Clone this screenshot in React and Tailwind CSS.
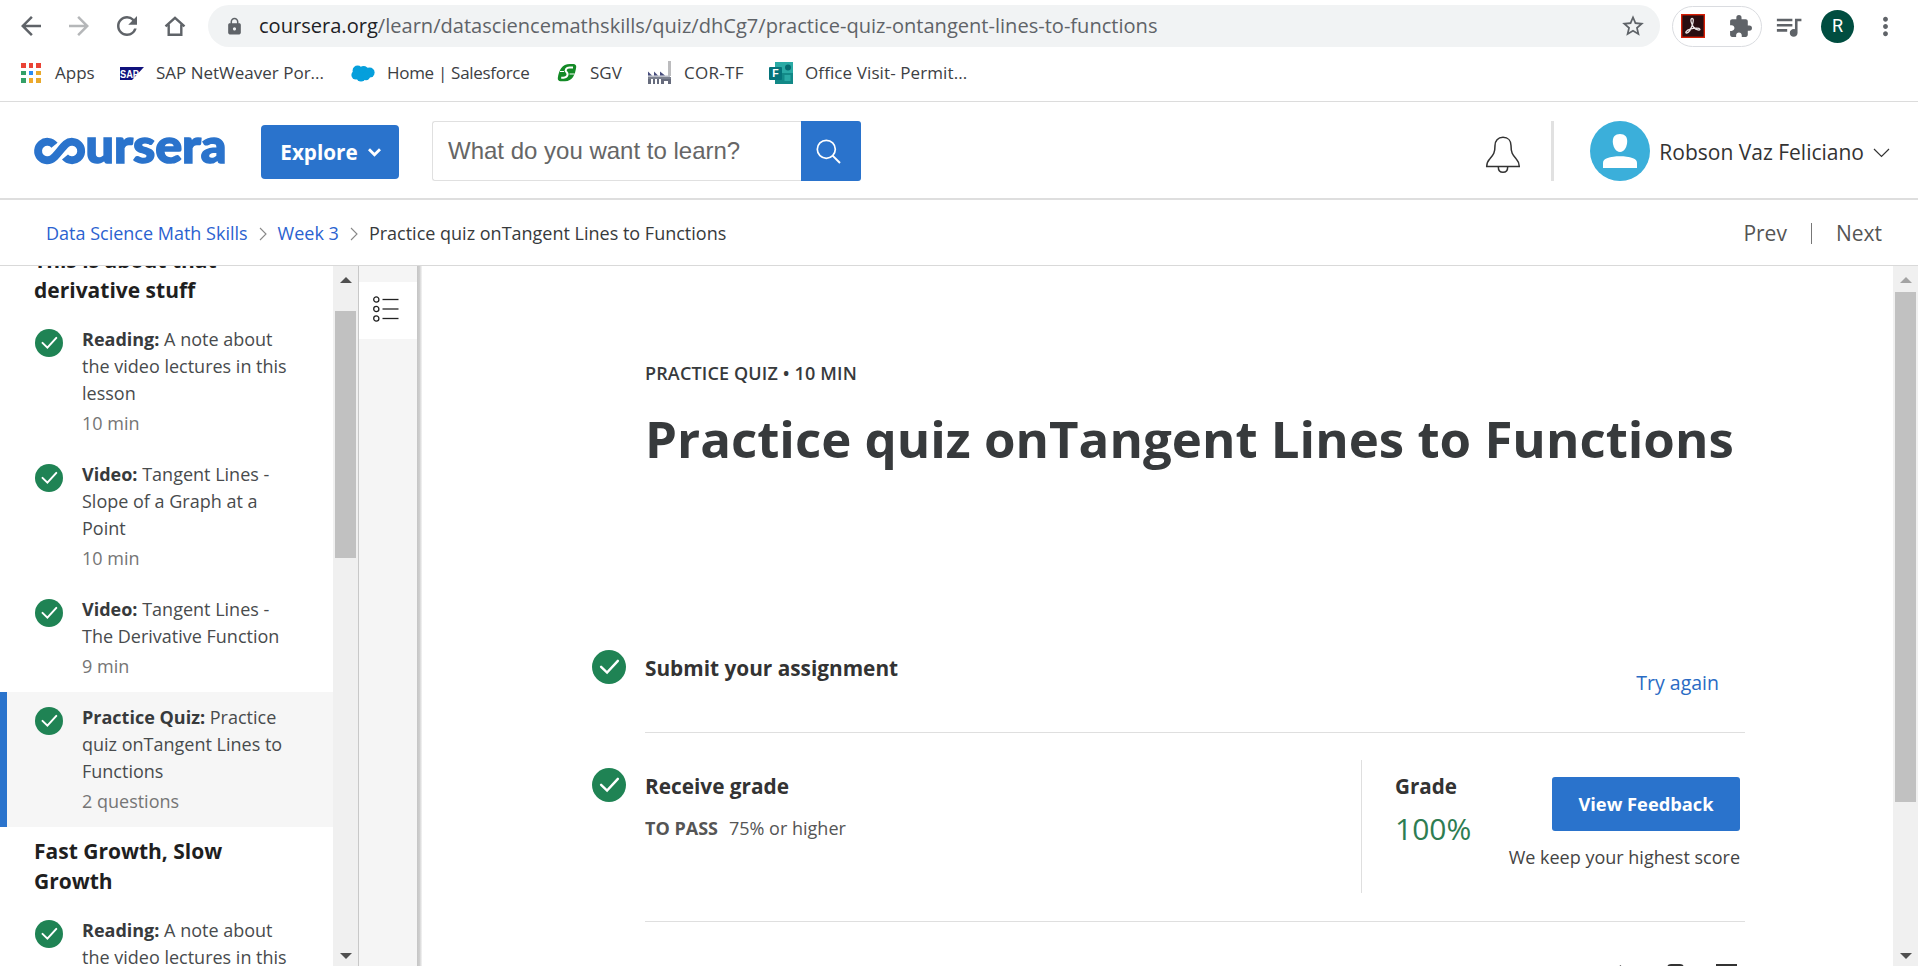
import React from 'react';
import {
  MdArrowBack,
  MdArrowForward,
  MdRefresh,
  MdLock,
  MdStarBorder,
  MdExtension,
  MdQueueMusic,
  MdMoreVert,
} from 'react-icons/md';

const APP_COLORS = [
  'bg-[#ea4335]', 'bg-[#ea4335]', 'bg-[#ea4335]',
  'bg-[#34a068]', 'bg-[#2a8bf2]', 'bg-[#e8a92c]',
  'bg-[#34a068]', 'bg-[#f0a92c]', 'bg-[#e8a92c]',
];

function AppsIcon() {
  return (
    <div className="grid w-5 grid-cols-3 gap-[3px]">
      {APP_COLORS.map((c, i) => (
        <span key={i} className={`h-[4.7px] ${c}`} />
      ))}
    </div>
  );
}

function SapIcon() {
  return (
    <svg width="24" height="13" viewBox="0 0 24 13">
      <path d="M0 0h24L12 13H0z" fill="#10127c" />
      <text x="0" y="10.6" fontFamily="Liberation Sans, sans-serif" fontWeight="700" fontSize="11.5" textLength="19" lengthAdjust="spacingAndGlyphs" fill="#fff">SAP</text>
    </svg>
  );
}

function SalesforceIcon() {
  return (
    <svg width="24" height="17" viewBox="0 0 24 17" fill="#059fdc" className="-ml-px">
      <circle cx="6.6" cy="5.6" r="5" />
      <circle cx="12.6" cy="5.6" r="4.6" />
      <circle cx="18.6" cy="7.6" r="5" />
      <circle cx="5" cy="10" r="4.6" />
      <circle cx="10" cy="12" r="4.6" />
      <circle cx="15" cy="11" r="4.2" />
    </svg>
  );
}

function SgvIcon() {
  return (
    <svg width="20" height="20" viewBox="0 0 20 20">
      <path d="M13 1h3.500a2.800 2.800 0 0 1 2.700 3.300c-1 7-3.600 14-11.200 14H3.500A2.800 2.800 0 0 1 .8 15C2 7 5 1 13 1z" fill="#138a26" />
      <path d="M16 4.600h-3.500C9.300 4.600 7.500 7 9.500 9s1.600 5.800-5.300 5.800" fill="none" stroke="#fff" strokeWidth="2" />
      <path d="M3 8.500h4M12.500 11h5" stroke="#fff" strokeWidth="1.100" />
    </svg>
  );
}

function FactoryIcon() {
  return (
    <svg width="24" height="24" viewBox="0 0 24 24">
      <path d="M20 0h3v15h-3z" fill="#bcbcbe" />
      <path d="M0 16h23v2H0z" fill="#7b808e" />
      <path d="M0 14.500h22V16H0z" fill="#b9bcc6" />
      <path d="M0 10.500l4 4H0zM6 10.500l4 4H6zM12 10.500l5 4h-5z" fill="#474d7c" />
      <path d="M0 18h3v5H0zM5 18h2v5H5zM9 18h2v5H9zM13 18h10v5h-3v-3h-4v3h-3z" fill="#666b7c" />
    </svg>
  );
}

function FormsIcon() {
  return (
    <svg width="24" height="22" viewBox="0 0 24 22">
      <path d="M6 0h18v22H6z" fill="#2aaaa5" />
      <path d="M6 11h18v11H6z" fill="#128987" />
      <circle cx="19" cy="5.500" r="3" fill="#056b70" />
      <path d="M15.500 13h6v6h-6z" fill="#29a9a4" />
      <rect x="0" y="5" width="13" height="13" rx="1" fill="#05737a" />
      <text x="6.500" y="15.300" textAnchor="middle" fontFamily="Liberation Sans, sans-serif" fontWeight="700" fontSize="10.500" fill="#fff">F</text>
    </svg>
  );
}

const BOOKMARKS = [
  { label: 'Apps', icon: AppsIcon, box: 'w-[99px]', slot: 'w-[34px]', text: '' },
  { label: 'SAP NetWeaver Por...', icon: SapIcon, box: 'w-[232px]', slot: 'w-9', text: '' },
  { label: 'Home | Salesforce', icon: SalesforceIcon, box: 'w-[205px]', slot: 'w-[35px]', text: 'tracking-[-0.3px]' },
  { label: 'SGV', icon: SgvIcon, box: 'w-[91px]', slot: 'w-[33px]', text: '' },
  { label: 'COR-TF', icon: FactoryIcon, box: 'w-[121px]', slot: 'w-9', text: 'tracking-[0.3px]' },
  { label: 'Office Visit- Permit...', icon: FormsIcon, box: 'w-[205px]', slot: 'w-9', text: 'tracking-[0.1px]' },
];

function Browser() {
  return (
    <div className="h-[102px] shrink-0 border-b border-[#dcdcdc] bg-white font-['Open_Sans',sans-serif]">
      <div className="flex h-[47px] items-center pt-[5px] text-[#5f6368]">
        <div className="flex w-[208px] shrink-0 items-center pl-4">
          <MdArrowBack size={30} />
          <MdArrowForward size={30} className="ml-[18px] text-[#b5b7b9]" />
          <MdRefresh size={30} className="ml-[18px]" />
          <svg width="22" height="20" viewBox="0 0 22 20" className="ml-[22px]" fill="none" stroke="currentColor" strokeWidth="2.400" strokeLinejoin="miter">
            <path d="M1.500 10.300L11 1.800l9.500 8.500M4.700 8.500v10.200h12.600V8.500" />
          </svg>
        </div>
        <div className="flex h-[42px] w-[1452px] items-center rounded-full bg-[#f1f3f4] pl-[17px] pr-[14px]">
          <MdLock size={19} />
          <div className="ml-[15px] mt-px flex-1 whitespace-nowrap text-[20.07px] leading-none">
            <span className="text-[#202124]">coursera.org</span>
            <span>/learn/datasciencemathskills/quiz/dhCg7/practice-quiz-ontangent-lines-to-functions</span>
          </div>
          <MdStarBorder size={26} />
        </div>
        <div className="ml-3 flex h-[41px] w-[90px] items-center justify-between rounded-full border border-[#dadce0] pl-2 pr-[8px]">
          <svg width="24" height="24" viewBox="0 0 24 24">
            <rect x="0.700" y="0.700" width="22.600" height="22.600" fill="#2a0d10" stroke="#d81e05" strokeWidth="1.400" />
            <path d="M11 4.500c2 0 1.300 3.500.4 6.300-1 3.200-3.500 8.200-5.700 8.200-2 0-.6-2.600 3.500-3.800 3.300-1 9-1.600 9.700 0 .5 1.600-3.600 1-6-1.700-2.500-2.800-4.200-9-1.900-9z" fill="none" stroke="#e9e2e2" strokeWidth="1.300" />
          </svg>
          <MdExtension size={25} />
        </div>
        <MdQueueMusic size={31} className="ml-[11px]" />
        <div className="ml-[17px] flex size-[33px] items-center justify-center rounded-full bg-[#004d40] font-['Roboto',sans-serif] text-[18px] leading-none text-white">R</div>
        <MdMoreVert size={29} className="ml-[17px]" />
      </div>
      <div className="flex h-[52px] items-center pl-[21px] text-[17px] leading-none text-[#3c4043]">
        {BOOKMARKS.map(({ label, icon: Icon, box, slot, text }) => (
          <div key={label} className={`flex shrink-0 items-center ${box}`}>
            <span className={`shrink-0 ${slot}`}><Icon /></span>
            <span className={`whitespace-nowrap leading-6 ${text}`}>{label}</span>
          </div>
        ))}
      </div>
    </div>
  );
}

function Logo() {
  return (
    <svg width="194" height="70" viewBox="0 -18 194 70" className="shrink-0 overflow-visible">
      <path d="M20.500 11.300A9.200 9.200 0 1 0 19.500 23.800C23.500 20.300 28 13.500 32 10A9.200 9.200 0 1 1 31 23" fill="none" stroke="#2a73cc" strokeWidth="7.900" />
      <text x="51.500" y="29.200" fontFamily="Lato, sans-serif" fontWeight="900" fontSize="48" textLength="141" lengthAdjust="spacingAndGlyphs" fill="#2a73cc" stroke="#2a73cc" strokeWidth="1.500">ursera</text>
    </svg>
  );
}

function Header() {
  return (
    <header className="flex h-[98px] shrink-0 items-center border-b-2 border-[#dedede] pt-[2px] pl-[34px] pr-7">
      <Logo />
      <button className="ml-[33px] mt-[2px] flex h-[54px] w-[138px] items-center justify-center rounded-[4px] bg-[#2a73cc] pl-px pt-px text-[20.700px] font-bold leading-none text-white">
        Explore
        <svg width="13" height="9" viewBox="0 0 13 9" className="ml-[10px]" fill="none" stroke="currentColor" strokeWidth="2.800">
          <path d="M1 1.200l5.500 5.600L12 1.200" />
        </svg>
      </button>
      <div className="ml-[33px] flex h-[60px] w-[429px]">
        <div className="flex flex-1 items-center rounded-l-[3px] border border-r-0 border-[#e0e0e0] pl-[15px] font-['Liberation_Sans',sans-serif] text-2xl leading-none text-[#666]">What do you want to learn?</div>
        <div className="flex w-[60px] items-center justify-center rounded-r-[3px] bg-[#2a73cc] pr-[6px]">
          <svg width="25" height="25" viewBox="0 0 25 25" fill="none" stroke="#fff" strokeWidth="1.700">
            <circle cx="10.300" cy="10.300" r="9" />
            <path d="M16.600 16.600l7.400 7.400" strokeWidth="2" />
          </svg>
        </div>
      </div>
      <svg width="36" height="38" viewBox="0 0 36 38" className="ml-auto mt-2" fill="none" stroke="#333" strokeWidth="1.500">
        <path d="M18 1.300c-5.200 0-8 3.500-8 8.200 0 7-1.400 9-5.300 13.500C2.300 25.600 1.700 27 1.700 30.500h32.600c0-3.500-.6-4.900-3-7.500C27.400 18.500 26 16.500 26 9.500c0-4.700-2.800-8.200-8-8.200z" />
        <path d="M13.300 30.700c0 3.600 2 5.600 4.700 5.600s4.700-2 4.700-5.600" />
      </svg>
      <div className="ml-[30px] h-[60px] w-[3px] bg-[#e1e1e1]" />
      <svg width="60" height="60" viewBox="0 0 60 60" className="ml-9">
        <circle cx="30" cy="30" r="30" fill="#3bafda" />
        <path d="M30 13c5 0 7.200 2.800 7.200 7.500S34.500 31 30 31s-7.200-5.800-7.200-10.500S25 13 30 13z" fill="#fff" />
        <path d="M13 47v-5c0-2.500 1.500-4 4-4.700 8-2.600 18-2.600 26 0 2.500.7 4 2.200 4 4.700v5z" fill="#fff" />
      </svg>
      <div className="ml-[9px] mt-[2px] whitespace-nowrap text-[21px] leading-none text-[#333]">Robson Vaz Feliciano</div>
      <svg width="17" height="10" viewBox="0 0 17 10" className="ml-[9px] mt-1" fill="none" stroke="#333" strokeWidth="1.200">
        <path d="M1 1l7.500 7.500L16 1" />
      </svg>
    </header>
  );
}

function Crumb() {
  return (
    <svg width="8" height="14" viewBox="0 0 8 14" className="mx-[11px] mt-[3px]" fill="none" stroke="#888" strokeWidth="1.100">
      <path d="M1 1l6 6-6 6" />
    </svg>
  );
}

function Breadcrumbs() {
  return (
    <nav className="flex h-[66px] shrink-0 items-center border-b border-[#d9d9d9] pl-[46px] pr-9 text-[18px] leading-none text-[#373a3c]">
      <span className="text-[#2b62d0]">Data Science Math Skills</span>
      <Crumb />
      <span className="text-[#2b62d0]">Week 3</span>
      <Crumb />
      <span>Practice quiz onTangent Lines to Functions</span>
      <div className="ml-auto mt-[2px] flex items-center text-[21px] text-[#555]">
        <span>Prev</span>
        <span className="mx-6 h-[21px] w-px bg-[#777]" />
        <span>Next</span>
      </div>
    </nav>
  );
}

function Check({ size, className = '' }) {
  return (
    <svg width={size} height={size} viewBox="0 0 28 28" className={`shrink-0 ${className}`}>
      <circle cx="14" cy="14" r="14" fill="#1f8354" />
      <path d="M7.500 13.900l4.900 4.700 8.900-9.700" fill="none" stroke="#fff" strokeWidth="2" strokeLinecap="round" />
    </svg>
  );
}

const LESSONS = [
  { kind: 'Reading:', lines: ['A note about', 'the video lectures in this', 'lesson'], time: '10 min' },
  { kind: 'Video:', lines: ['Tangent Lines -', 'Slope of a Graph at a', 'Point'], time: '10 min' },
  { kind: 'Video:', lines: ['Tangent Lines -', 'The Derivative Function'], time: '9 min' },
  { kind: 'Practice Quiz:', lines: ['Practice', 'quiz onTangent Lines to', 'Functions'], time: '2 questions', active: true },
];

const NEXT_LESSON = { kind: 'Reading:', lines: ['A note about', 'the video lectures in this'] };

function Lesson({ kind, lines, time, active }) {
  return (
    <div className={`flex shrink-0 border-l-[7px] py-3 pl-[28px] text-[18px] leading-[27px] ${active ? 'border-[#2a73cc] bg-[#f6f6f6]' : 'border-transparent'}`}>
      <Check size={28} className="mt-[3px]" />
      <div className="ml-[19px] whitespace-nowrap text-[#484b4d]">
        {lines.map((line, i) => (
          <div key={i}>
            {i === 0 && <b className="font-bold text-[#373a3c]">{kind} </b>}
            {line}
          </div>
        ))}
        {time && <div className="mt-[3px] text-[#757575]">{time}</div>}
      </div>
    </div>
  );
}

function Heading({ lines, className }) {
  return (
    <div className={`shrink-0 whitespace-nowrap pb-[9px] pl-[34px] text-[21px] font-bold leading-[30px] text-[#1f1f1f] ${className}`}>
      {lines.map((l) => (
        <div key={l}>{l}</div>
      ))}
    </div>
  );
}

function Arrow({ up, color }) {
  return (
    <svg width="12" height="6" viewBox="0 0 12 6" className="shrink-0" fill={color}>
      <path d={up ? 'M0 6l6-6 6 6z' : 'M0 0h12L6 6z'} />
    </svg>
  );
}

function Sidebar() {
  return (
    <aside className="flex h-full shrink-0">
      <div className="flex w-[333px] flex-col overflow-hidden">
        <Heading lines={['This is about that', 'derivative stuff']} className="-mt-[21px]" />
        {LESSONS.map((l, i) => (
          <Lesson key={i} {...l} />
        ))}
        <Heading lines={['Fast Growth, Slow', 'Growth']} className="pt-[9px]" />
        <Lesson {...NEXT_LESSON} />
      </div>
      <div className="flex w-[26px] flex-col items-center border-r border-[#c8c8c8] bg-[#f0f0f0] pb-[7px] pt-[11px]">
        <Arrow up color="#505050" />
        <div className="mt-[28px] h-[247px] w-[21px] bg-[#c1c1c1]" />
        <div className="flex-1" />
        <Arrow color="#505050" />
      </div>
      <div className="w-[58px] bg-[#f5f5f5] pt-4">
        <div className="flex h-[57px] items-center bg-white pb-[3px] pl-[14px]">
          <svg width="26" height="26" viewBox="0 0 26 26" fill="none" stroke="#222" strokeWidth="1.300">
            {[3.5, 13, 22.5].map((y) => (
              <g key={y}>
                <circle cx="3.300" cy={y} r="2.600" />
                <path d={`M9.500 ${y}H25.500`} />
              </g>
            ))}
          </svg>
        </div>
      </div>
      <div className="w-[5px] bg-linear-to-r from-[#c4c4c4] via-[#cfcfcf] to-[#f5f5f5]" />
    </aside>
  );
}

function Content() {
  return (
    <main className="flex min-w-0 flex-1">
      <div className="flex flex-1 flex-col overflow-hidden pl-[170px] pr-[148px]">
        <div className="flex flex-col pl-[53px]">
          <div className="mt-[94px] whitespace-nowrap text-[18px] font-semibold leading-[27px] tracking-[0.15px] text-[#373a3c]">PRACTICE QUIZ • 10 MIN</div>
          <h1 className="mt-[18px] whitespace-nowrap text-[51px] font-bold leading-[66px] text-[#373a3c]">Practice quiz onTangent Lines to Functions</h1>
        </div>
        <section className="mt-[178px] flex h-[84px] shrink-0">
          <Check size={34} className="mt-px" />
          <div className="ml-[19px] flex flex-1 justify-between border-b border-[#dfdfdf] pr-[26px]">
            <div className="mt-[4px] text-[20.800px] font-bold leading-[30px] text-[#333]">Submit your assignment</div>
            <div className="mt-[19px] text-[19.500px] font-medium leading-[30px] text-[#2a6bc4]">Try again</div>
          </div>
        </section>
        <section className="flex h-[189px] shrink-0">
          <Check size={34} className="mt-[35px]" />
          <div className="ml-[19px] flex flex-1 border-b border-[#dfdfdf]">
            <div className="flex-1 pt-[38px]">
              <div className="text-[20.800px] font-bold leading-[30px] text-[#333]">Receive grade</div>
              <div className="mt-[14px] flex text-[18px] leading-[27px] text-[#555]">
                <b className="mr-[11px] font-bold">TO PASS</b>
                <span>75% or higher</span>
              </div>
            </div>
            <div className="mb-7 mt-[27px] flex w-[384px] border-l border-[#dfdfdf] pl-[33px] pr-[5px]">
              <div className="pt-[11px]">
                <div className="text-[20.600px] font-bold leading-[30px] text-[#333]">Grade</div>
                <div className="mt-[7px] text-[30px] leading-[42px] text-[#2e7d52]">100%</div>
              </div>
              <div className="flex flex-1 flex-col items-end pt-[17px]">
                <button className="flex h-[54px] w-[188px] items-center justify-center rounded-[3px] bg-[#2a73cc] text-[18.300px] font-bold leading-none text-white">View Feedback</button>
                <div className="mt-[13px] whitespace-nowrap text-[18px] leading-[27px] text-[#444]">We keep your highest score</div>
              </div>
            </div>
          </div>
        </section>
        <div className="mt-[42px] flex shrink-0 justify-end pr-[8px]">
          <svg width="120" height="24" viewBox="0 0 120 24" fill="none" stroke="#333" strokeWidth="2">
            <path d="M1 12L3.500 1.500v20" strokeWidth="1.200" />
            <path d="M51 14V4q0-3 3-3h9q3 0 3 3v10l-7.500 8z" />
            <path d="M100 1h19v21h-19z" />
          </svg>
        </div>
      </div>
      <div className="flex w-[25px] shrink-0 flex-col items-center bg-[#f0f0f0] pb-[7px] pt-[11px]">
        <Arrow up color="#a3a3a3" />
        <div className="mt-[9px] h-[510px] w-[21px] bg-[#c1c1c1]" />
        <div className="flex-1" />
        <Arrow color="#505050" />
      </div>
    </main>
  );
}

export default function App() {
  return (
    <div className="flex h-[966px] w-[1918px] flex-col overflow-hidden bg-white font-['Open_Sans',sans-serif]">
      <Browser />
      <Header />
      <Breadcrumbs />
      <div className="flex min-h-0 flex-1">
        <Sidebar />
        <Content />
      </div>
    </div>
  );
}
